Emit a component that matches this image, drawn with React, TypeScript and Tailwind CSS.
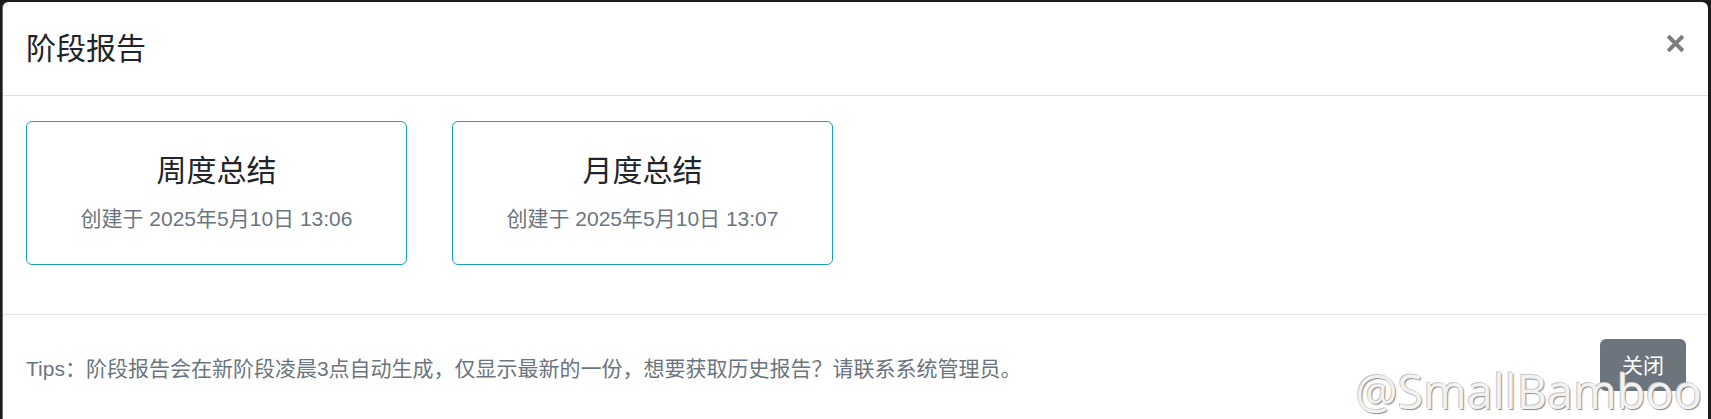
import React from "react";

const font = { fontFamily: '"Liberation Sans", "Noto Sans CJK SC", sans-serif' };

const reports = [
  { title: "周度总结", created: "创建于 2025年5月10日 13:06" },
  { title: "月度总结", created: "创建于 2025年5月10日 13:07" },
];

export default function App() {
  return (
    <div
      className="relative w-full h-[419px] overflow-hidden bg-[#1c1c1c] pt-[2px] pl-[2px] pr-[3px]"
      style={font}
    >
      <div className="h-[430px] bg-white rounded-[6px] border-l border-[#6b6b6b] flex flex-col">
        {/* Header */}
        <div className="h-[94px] flex items-center justify-between pl-[23px] pr-[24px] border-b border-[#dee2e6] shrink-0">
          <h5 className="text-[30px] leading-[45px] text-[#212529] font-normal">阶段报告</h5>
          <button className="mb-[10px]" aria-label="关闭">
            <svg width="17" height="17" viewBox="0 0 17 17">
              <path d="M2.5 2.5 L14.5 14.5 M14.5 2.5 L2.5 14.5" stroke="#7d7d7d" strokeWidth="4" strokeLinecap="square" fill="none" />
            </svg>
          </button>
        </div>

        {/* Body */}
        <div className="flex gap-[45px] pl-[23px] pt-[25px] pb-[49px] border-b border-[#dee2e6] shrink-0">
          {reports.map((r) => (
            <div
              key={r.title}
              className="w-[381px] h-[144px] border border-[#17a2b8] rounded-[6px] flex flex-col items-center justify-center"
            >
              <div className="text-[30px] leading-[36px] text-[#212529]">{r.title}</div>
              <div className="mt-[14px] text-[21px] leading-[31px] text-[#6c757d]">{r.created}</div>
            </div>
          ))}
        </div>

        {/* Footer */}
        <div className="h-[100px] flex items-center justify-between pl-[23px] pr-[22px] shrink-0">
          <span className="pt-[6px] text-[21px] leading-[31px] text-[#6c757d]">
            Tips：阶段报告会在新阶段凌晨3点自动生成，仅显示最新的一份，想要获取历史报告？请联系系统管理员。
          </span>
          <button className="w-[86px] h-[52px] rounded-[6px] bg-[#6c757d] text-white text-[21px] leading-[31px]">
            关闭
          </button>
        </div>
      </div>

      {/* watermark */}
      <div
        className="absolute right-[9px] bottom-[4px] text-[47px] leading-none text-[#f2f2f2] pointer-events-none select-none"
        style={{ fontFamily: '"Open Sans", "Noto Sans", sans-serif', textShadow: "1px 1px 1px #8a8a8a, -1px -1px 0 #c8c8c8" }}
      >
        @SmallBamboo
      </div>
    </div>
  );
}
